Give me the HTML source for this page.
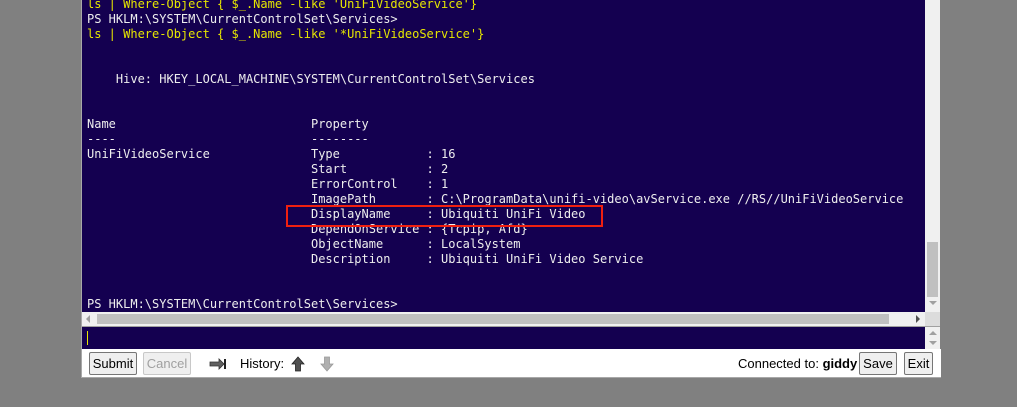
<!DOCTYPE html>
<html><head><meta charset="utf-8"><style>
html,body{margin:0;padding:0;width:1017px;height:407px;background:#808080;overflow:hidden;position:relative;font-family:"Liberation Sans",sans-serif}
.term{position:absolute;left:82px;top:0;width:843px;height:312px;background:#140050;overflow:hidden}
pre{position:absolute;left:5px;top:-3px;margin:0;font-family:"DejaVu Sans Mono",monospace;font-size:12px;line-height:15px;color:#eeeeee;white-space:pre}
.y{color:#e6e600}
.vs{position:absolute;left:925px;top:0;width:15px;height:312px;background:#f0f0f0}
.vthumb{position:absolute;left:927px;top:242px;width:11px;height:55px;background:#c0c0c0}
.hs{position:absolute;left:82px;top:312px;width:843px;height:14px;background:#f0f0f0}
.hthumb{position:absolute;left:97px;top:314px;width:792px;height:10px;background:#c0c0c0}
.corner{position:absolute;left:925px;top:312px;width:15px;height:14px;background:#dcdcdc}
.sep{position:absolute;left:82px;top:326px;width:858px;height:1px;background:#a0a0a0}
.inp{position:absolute;left:82px;top:327px;width:843px;height:22px;background:#140050}
.caret{position:absolute;left:87px;top:331px;width:1px;height:14px;background:#e6e600}
.is{position:absolute;left:925px;top:327px;width:15px;height:22px;background:#f0f0f0}
.bar{position:absolute;left:81px;top:349px;width:859px;height:28px;background:#fff;border-bottom:1px solid #a8a8a8;border-left:1px solid #a8a8a8}
.lb{position:absolute;left:81px;top:0;width:1px;height:349px;background:#a8a8a8}
.btn{position:absolute;top:352px;height:23px;border:1px solid #767676;border-radius:2px;background:#efefef;font-size:13px;line-height:21px;text-align:center;color:#000;box-sizing:border-box}
.t{position:absolute;top:356px;font-size:13px;color:#000}
.tri{position:absolute;width:0;height:0}
</style></head><body>
<div class="lb"></div>
<div class="term"><pre><span class="y">ls | Where-Object { $_.Name -like 'UniFiVideoService'}</span>
PS HKLM:\SYSTEM\CurrentControlSet\Services&gt;
<span class="y">ls | Where-Object { $_.Name -like '*UniFiVideoService'}</span>


    Hive: HKEY_LOCAL_MACHINE\SYSTEM\CurrentControlSet\Services


Name                           Property
----                           --------
UniFiVideoService              Type            : 16
                               Start           : 2
                               ErrorControl    : 1
                               ImagePath       : C:\ProgramData\unifi-video\avService.exe //RS//UniFiVideoService
                               DisplayName     : Ubiquiti UniFi Video
                               DependOnService : {Tcpip, Afd}
                               ObjectName      : LocalSystem
                               Description     : Ubiquiti UniFi Video Service


PS HKLM:\SYSTEM\CurrentControlSet\Services&gt;</pre>
<div style="position:absolute;left:204px;top:205px;width:313px;height:18px;border:2px solid #f02010"></div>
</div>
<div class="vs"></div><div class="vthumb"></div>
<div class="tri" style="left:929px;top:301px;border-left:4px solid transparent;border-right:4px solid transparent;border-top:4px solid #a0a0a0"></div>
<div class="hs"></div><div class="hthumb"></div>
<div class="tri" style="left:86px;top:315px;border-top:4px solid transparent;border-bottom:4px solid transparent;border-right:4px solid #a0a0a0"></div>
<div class="tri" style="left:916px;top:315px;border-top:4px solid transparent;border-bottom:4px solid transparent;border-left:4px solid #505050"></div>
<div class="corner"></div>
<div class="sep"></div>
<div class="inp"></div><div class="caret"></div>
<div class="is"></div>
<div class="tri" style="left:929px;top:331px;border-left:4px solid transparent;border-right:4px solid transparent;border-bottom:4px solid #a0a0a0"></div>
<div class="tri" style="left:929px;top:341px;border-left:4px solid transparent;border-right:4px solid transparent;border-top:4px solid #a0a0a0"></div>
<div class="bar"></div>
<div class="btn" style="left:89px;width:48px">Submit</div>
<div class="btn" style="left:143px;width:48px;color:#a0a0a0;border-color:#c8c8c8">Cancel</div>
<svg style="position:absolute;left:209px;top:357px" width="18" height="14"><path d="M1 5h9V2l5 5-5 5V9H1z" fill="#606060" stroke="#333" stroke-width="0.8"/><rect x="15" y="2" width="2" height="10" fill="#222"/></svg>
<div class="t" style="left:240px">History:</div>
<svg style="position:absolute;left:291px;top:356px" width="14" height="16"><path d="M7 1L13 8H9.5V15H4.5V8H1z" fill="#505050" stroke="#222" stroke-width="0.8"/></svg>
<svg style="position:absolute;left:320px;top:356px" width="14" height="16"><path d="M7 15L13 8H9.5V1H4.5V8H1z" fill="#b0b0b0" stroke="#999" stroke-width="0.8"/></svg>
<div class="t" style="left:738px">Connected to: <b>giddy</b></div>
<div class="btn" style="left:859px;width:38px">Save</div>
<div class="btn" style="left:904px;width:29px">Exit</div>
</body></html>
